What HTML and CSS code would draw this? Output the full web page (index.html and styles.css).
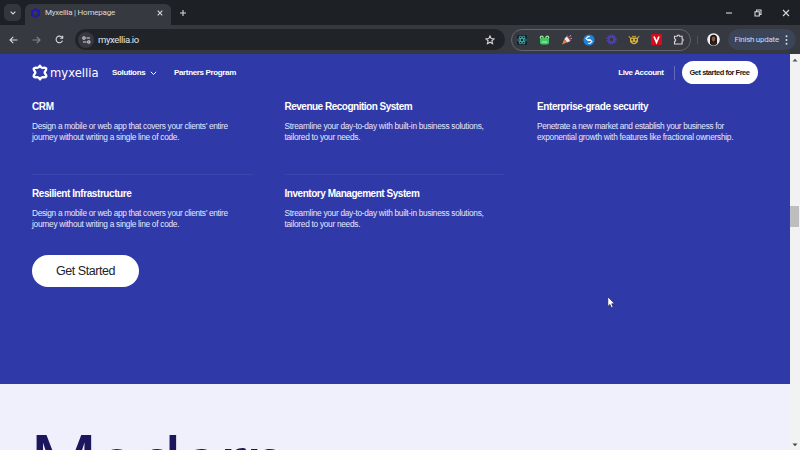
FILE: index.html
```html
<!DOCTYPE html>
<html lang="en">
<head>
<meta charset="utf-8">
<title>Myxellia | Homepage</title>
<link rel="stylesheet" href="styles.css">
</head>
<body>
<div class="tabs">
  <div class="tab-search"><svg width="6" height="4" viewBox="0 0 6 4"><path d="M.6.6 3 3 5.400.6" class="line"/></svg></div>
  <div class="tab">
    <svg class="fav" width="11" height="12" viewBox="-6 -6 12 12"><path d="M0-4.600 1.700-2.900 4-2.300 3.400 0 4 2.300 1.700 2.900 0 4.600-1.700 2.900-4 2.300-3.400 0-4-2.300-1.700-2.900Z" fill="none" stroke="#2417ae" stroke-width="2" stroke-linejoin="round"/></svg>
    <span class="tab-title">Myxellia | Homepage</span>
    <svg width="6" height="6" viewBox="0 0 6 6"><path d="m.7.7 4.600 4.600m0-4.600L.7 5.300" class="line"/></svg>
  </div>
  <svg class="plus" width="8" height="8" viewBox="0 0 8 8"><path d="M4 1v6M1 4h6" class="line"/></svg>
  <div class="window">
    <svg width="8" height="8" viewBox="0 0 8 8"><path d="M1 4h6" class="line"/></svg>
    <svg width="8" height="8" viewBox="0 0 8 8"><path d="M1 2.700h4.300V7H1ZM2.600 2.500V1H7v4.400H5.500" class="line"/></svg>
    <svg width="8" height="8" viewBox="0 0 8 8"><path d="m1 1 6 6m0-6L1 7" class="line"/></svg>
  </div>
</div>
<div class="toolbar">
  <div class="nav-icons">
    <svg width="9" height="8" viewBox="0 0 9 8"><path d="M8.500 4H1.200M4.300.8 1 4l3.300 3.200" class="line"/></svg>
    <svg class="dim" width="9" height="8" viewBox="0 0 9 8"><path d="M.5 4h7.300M4.700.8 8 4 4.700 7.200" class="line"/></svg>
    <svg width="9" height="9" viewBox="0 0 9 9"><path d="M7.500 5.600A3.300 3.300 0 1 1 7.100 2.500M7.700.8v2.500H5.100" class="line"/></svg>
  </div>
  <div class="address">
    <span class="site"><svg width="9" height="8" viewBox="0 0 9 8"><path d="M4.500 2H8M1 6h3.500" class="line"/><circle cx="2" cy="2" r="1.200" class="line"/><circle cx="6.800" cy="6" r="1.200" class="line"/></svg></span>
    <span class="url">myxellia.io</span>
    <svg width="10" height="10" viewBox="0 0 10 10"><path d="m5 .9 1.200 2.700 2.900.3-2.200 1.900.7 2.900L5 7.200 2.400 8.700l.7-2.900L.9 3.900l2.900-.3Z" class="line"/></svg>
  </div>
  <div class="extensions">
    <svg width="10" height="10" viewBox="0 0 10 10"><rect width="10" height="10" rx="1" fill="#10252b"/><g fill="none" stroke="#50b9b9" stroke-width=".7"><ellipse cx="5" cy="5" rx="4.500" ry="1.600"/><ellipse cx="5" cy="5" rx="4.500" ry="1.600" transform="rotate(60 5 5)"/><ellipse cx="5" cy="5" rx="4.500" ry="1.600" transform="rotate(120 5 5)"/></g></svg>
    <svg width="11" height="10" viewBox="0 0 11 10"><circle cx="2.700" cy="2.500" r="2" fill="#a6dda7"/><circle cx="8.300" cy="2.500" r="2" fill="#a6dda7"/><rect x="1" y="2.800" width="9" height="6.700" rx="2" fill="#40c763"/><path d="M3 7h5" stroke="#b7f3b9"/><circle cx="2.700" cy="2.500" r=".7" fill="#304b3a"/><circle cx="8.300" cy="2.500" r=".7" fill="#304b3a"/></svg>
    <svg width="10" height="10" viewBox="0 0 10 10"><path d="m0 9.500 2-5 3 3Z" fill="#df8042"/><path d="m2.200 4 3.300-3.500 3.400 5.300-3.700 1.800Z" fill="#eee5ef"/><path d="m4.800.5 4.400 5.700" stroke="#a42f4d" stroke-width="1.200"/><path d="M7.500 1.500 9.200.4M8.500 3.400h1.400" stroke="#e3abc4"/></svg>
    <svg width="12" height="12" viewBox="0 0 12 12"><circle cx="6" cy="6" r="5.600" fill="#2383d7"/><path d="M6.700 2.600H5L3.100 4.500 5 6.400h2.200M5.300 9.400H7l1.900-1.900L7 5.600H5" fill="none" stroke="#e9f7ff" stroke-width="1.200"/></svg>
    <svg width="11" height="11" viewBox="0 0 11 11"><circle cx="5.500" cy="5.500" r="4.200" fill="none" stroke="#5144bd" stroke-width="1.800" stroke-dasharray="1.300 .9"/><circle cx="5.500" cy="5.500" r="2.700" fill="none" stroke="#5144bd" stroke-width="1.400"/></svg>
    <svg width="12" height="11" viewBox="0 0 12 11"><path d="M1 2c0 1.500 1 2 2.300 2h5.400C10 4 11 3.500 11 2" fill="none" stroke="#d7b744"/><path d="M2 4h8v3.500C9 9.500 7.700 10.200 6 10.200S3 9.500 2 7.500Z" fill="#d9b53b"/><path d="m4 3 .7-1.500L6 2.700l1.300-1.200L8 3" fill="#d9b53b"/><circle cx="4.200" cy="5.800" r="1" fill="#39362f"/><circle cx="7.800" cy="5.800" r="1" fill="#39362f"/><path d="M4.400 8q1.600 1 3.200 0" stroke="#493d25" fill="none"/></svg>
    <svg width="11" height="11" viewBox="0 0 11 11"><rect width="11" height="11" rx="1" fill="#d50b20"/><path d="m3 2.500 2.500 5.800L8 2.500" fill="none" stroke="#fff" stroke-width="1.700"/></svg>
    <svg class="puzzle" width="12" height="11" viewBox="0 0 12 11"><path d="M1.500 2.200h2.700a1.200 1.200 0 0 1 2.400 0h2.500v2.700a1.100 1.100 0 0 1 0 2.200V10H1.500V7.400a1.300 1.300 0 0 0 0-2.600Z" class="line"/></svg>
  </div>
  <span class="bar-divider"></span>
  <svg class="avatar" width="13" height="13" viewBox="0 0 13 13"><circle cx="6.500" cy="6.500" r="6.300" fill="#eee"/><path d="M3 11V5.300a3.500 3.500 0 0 1 7 0V11Z" fill="#211817"/><ellipse cx="6.500" cy="6" rx="1.800" ry="2.400" fill="#8d5646"/><path d="M3.500 11.500Q4 9 6.500 9t3 2.500q-3 2-6 0Z" fill="#2c2526"/></svg>
  <div class="update"><span>Finish update</span><svg width="3" height="10" viewBox="0 0 3 10"><g fill="#c9dcf4"><circle cx="1.500" cy="1.300" r="1"/><circle cx="1.500" cy="5" r="1"/><circle cx="1.500" cy="8.700" r="1"/></g></svg></div>
</div>
<div class="viewport">
  <main>
    <section class="features">
      <header>
        <div class="brand"><svg width="16" height="17" viewBox="-8 -8.500 16 17"><path d="M0-6.800Q1.200-4.300 2.700-4.600Q5.800-5.200 6.200-3.800Q6.300-2.500 4.900-.7Q4.600 0 4.900.7Q6.700 3 6.200 3.900Q5.500 5.200 2.700 4.600Q1.300 4.500 0 6.800Q-1.300 4.500-2.700 4.600Q-5.500 5.200-6.200 3.900Q-6.700 3-4.900.7Q-4.600 0-4.900-.7Q-6.700-3-6.200-3.900Q-5.500-5.200-2.700-4.600Q-1.300-4.500 0-6.800Z" fill="none" stroke="#fff" stroke-width="2.400" stroke-linejoin="round"/></svg><span class="wordmark">myxellia</span></div>
        <span class="solutions">Solutions</span>
        <svg class="chev" width="7" height="5" viewBox="0 0 7 5"><path d="m.8.8 2.700 2.700L6.200.8" fill="none" stroke="#fff"/></svg>
        <span class="partners">Partners Program</span>
        <span class="account">Live Account</span>
        <span class="rule"></span>
        <a class="free"><span>Get started for Free</span></a>
      </header>
      <div class="grid">
        <article class="card"><h3 class="t1">CRM</h3><p><span class="d1">Design a mobile or web app that covers your clients’ entire</span><br><span class="d2">journey without writing a single line of code.</span></p></article>
        <article class="card"><h3 class="t2">Revenue Recognition System</h3><p><span class="d3">Streamline your day-to-day with built-in business solutions,</span><br><span class="d4">tailored to your needs.</span></p></article>
        <article class="card"><h3 class="t3">Enterprise-grade security</h3><p><span class="d5">Penetrate a new market and establish your business for</span><br><span class="d6">exponential growth with features like fractional ownership.</span></p></article>
        <article class="card lined"><h3 class="t4">Resilient Infrastructure</h3><p><span class="d1">Design a mobile or web app that covers your clients’ entire</span><br><span class="d2">journey without writing a single line of code.</span></p></article>
        <article class="card lined"><h3 class="t5">Inventory Management System</h3><p><span class="d3">Streamline your day-to-day with built-in business solutions,</span><br><span class="d4">tailored to your needs.</span></p></article>
      </div>
      <a class="start"><span>Get Started</span></a>
    </section>
    <section class="modern"><h2>Modern</h2></section>
  </main>
  <aside class="scroll">
    <svg width="6" height="4" viewBox="0 0 6 4"><path d="M.5 3.500 3 .8l2.500 2.700Z" fill="#555"/></svg>
    <i class="thumb"></i>
    <svg width="6" height="4" viewBox="0 0 6 4"><path d="m.5.500 2.500 2.700L5.500.5Z" fill="#444"/></svg>
  </aside>
</div>
<svg class="cursor" width="9" height="13" viewBox="0 0 8 12"><path d="M.6.7v9l2-1.900 1.300 3 1.600-.7-1.300-2.900h2.700Z" fill="#fff" stroke="#171b4d" stroke-width=".6"/></svg>
</body>
</html>
```
FILE: styles.css
```css
* { box-sizing: border-box; }
body { margin: 0; width: 800px; height: 450px; overflow: hidden; font-family: "Liberation Sans", sans-serif; color: #fff; background: #36393f; }
svg { display: block; flex: none; }
span { white-space: nowrap; }
.line { fill: none; stroke: #d5d7dc; stroke-width: 1.1; }
.tabs { height: 25px; background: #1d2024; display: flex; align-items: center; padding-left: 4px; }
.tab-search { width: 17px; height: 17px; border-radius: 5px; background: #33363c; display: flex; align-items: center; justify-content: center; }
.tab { width: 146px; height: 21px; margin: 4px 0 0 4px; border-radius: 6px 6px 0 0; background: #36393f; display: flex; align-items: center; padding: 0 8px 4px 5px; }
.tab-title { flex: 1; margin-left: 4px; font: 8px/12px Roboto, sans-serif; letter-spacing: -.22px; color: #d8dade; }
.plus { margin-left: 8px; }
.window { display: flex; gap: 20.500px; margin: 0 10px 0 auto; }
.toolbar { height: 29px; background: #36393f; display: flex; align-items: center; }
.nav-icons { display: flex; align-items: center; gap: 14px; margin-left: 9px; width: 66px; }
.dim { opacity: .5; }
.address { width: 430px; height: 21px; border-radius: 11px; background: #202328; display: flex; align-items: center; padding: 0 10px 0 3px; }
.site { width: 16px; height: 16px; border-radius: 50%; background: #36393f; display: flex; align-items: center; justify-content: center; }
.url { flex: 1; font: 9.500px/14px Roboto, sans-serif; letter-spacing: -.36px; color: #e2e3e7; margin-left: 4px; }
.extensions { width: 180px; height: 22px; margin-left: 5.500px; border: 1px solid #62656b; border-radius: 11px; display: grid; grid-template-columns: repeat(8, 22.500px); align-items: center; justify-items: center; padding: 0; }
.extensions svg { margin-left: -2px; }
.bar-divider { width: 1px; height: 8px; background: #50545b; margin-left: 6px; }
.avatar { margin-left: 9px; }
.update { width: 68px; height: 21px; margin-left: 8px; border-radius: 11px; background: #3b4557; display: flex; align-items: center; justify-content: space-between; padding: 0 8px 0 7px; font: 8px/12px Roboto, sans-serif; letter-spacing: -.27px; color: #c9dcf4; }
.viewport { height: 396px; display: flex; }
main { width: 789.500px; overflow: hidden; background: #eff0fb; }
.features { height: 330px; background: #3039a8; padding: 0 32px; }
header { height: 37px; display: flex; align-items: center; font-weight: bold; font-size: 8px; letter-spacing: -.35px; }
.brand { display: flex; align-items: center; width: 80px; }
.wordmark { font: 11.600px/16px "DejaVu Sans", sans-serif; letter-spacing: 0; margin: 0 0 0 2px; }
.solutions { width: 34px; }
.chev { margin: 2px 0 0 4px; }
.partners { margin-left: 17px; }
.account { margin-left: auto; letter-spacing: -.38px; }
.rule { width: 1px; height: 14px; background: #626bc0; margin: 0 7px 0 10px; }
.free { width: 76px; height: 23px; border-radius: 12px; background: #fff; color: #17191f; display: flex; align-items: center; justify-content: center; font-size: 7.500px; letter-spacing: -.48px; }
.grid { display: grid; grid-template-columns: repeat(3, 220.500px); gap: 0 32px; grid-template-rows: 83px 81px; }
.card { padding-top: 9px; }
.lined { border-top: 1px solid #3c45ae; padding-top: 12px; }
h3 { margin: 0; font-size: 10px; line-height: 14px; white-space: nowrap; }
.t1 { letter-spacing: -.4px; }
.t2 { letter-spacing: -.5px; }
.t3 { letter-spacing: -.4px; }
.t4 { letter-spacing: -.42px; }
.t5 { letter-spacing: -.46px; }
.card p { margin: 7px 0 0; font-size: 8.300px; line-height: 11px; color: #e6e8fc; }
.d1 { letter-spacing: -.32px; }
.d2, .d3, .d4 { letter-spacing: -.28px; }
.d5 { letter-spacing: -.33px; }
.d6 { letter-spacing: -.27px; }
.start { width: 107px; height: 32px; border-radius: 16px; background: #fff; color: #202229; display: flex; align-items: center; justify-content: center; font-size: 12.500px; letter-spacing: -.45px; }
.modern { height: 66px; overflow: hidden; padding: 34.500px 0 0 30px; }
h2 { margin: 0; font: 75px/88px Inter, sans-serif; letter-spacing: -3.300px; color: #1c165d; }
.scroll { width: 10.500px; background: #f2f2f3; display: flex; flex-direction: column; align-items: center; justify-content: space-between; padding: 4px 0 3px; }
.thumb { width: 9px; height: 21px; background: #bebec0; margin: 144px 0 auto; }
.cursor { position: absolute; left: 607px; top: 296px; }
```
